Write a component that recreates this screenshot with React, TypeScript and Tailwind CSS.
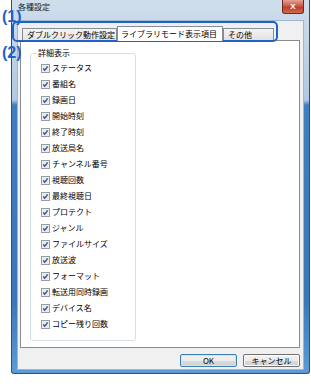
import React from "react";

const items = [
  "ステータス",
  "番組名",
  "録画日",
  "開始時刻",
  "終了時刻",
  "放送局名",
  "チャンネル番号",
  "視聴回数",
  "最終視聴日",
  "プロテクト",
  "ジャンル",
  "ファイルサイズ",
  "放送波",
  "フォーマット",
  "転送用同時録画",
  "デバイス名",
  "コピー残り回数",
];

function CheckBox() {
  return (
    <svg width="9" height="9" viewBox="0 0 9 9" className="shrink-0">
      <rect x="0.5" y="0.5" width="8" height="8" fill="#f4f4f4" stroke="#9a9b9c" />
      <rect x="1.5" y="1.5" width="6" height="6" fill="#e3e6ea" />
      <path d="M2.2 4.5 L3.7 6.2 L6.8 2.3" fill="none" stroke="#2f55a0" strokeWidth="1.3" />
    </svg>
  );
}

export default function App() {
  return (
    <div className="relative w-[311px] h-[386px] overflow-hidden bg-white font-['Noto_Sans_CJK_JP',sans-serif] text-black">
      {/* window frame */}
      <div className="ml-[11px] w-[299px] h-[374px] flex flex-col border border-t-0 border-[#30506f] rounded-b-[3px] px-[5px] pb-[3px] bg-[linear-gradient(to_bottom,#d0deec_0px,#bdd1e6_60px,#b0c9e3_100px,#3f7fc0_105px,#3a77b6_300px,#5d9bd6_372px)]">
        {/* title bar */}
        <div className="h-[20px] flex items-start justify-between">
          <span className="pl-[1px] pt-[2px] text-[8px] leading-[10px] text-[#1c1c1c]">各種設定</span>
          <div className="w-[22px] h-[14px] flex items-center justify-center rounded-b-[3px] border border-t-0 border-[#6b2a22] bg-[linear-gradient(to_bottom,#e4a295,#c8503e_50%,#b83a28_51%,#d66a4a)]">
            <span className="text-[8px] leading-none font-bold text-white font-['Liberation_Sans',sans-serif]">X</span>
          </div>
        </div>

        {/* client area */}
        <div className="flex-1 flex flex-col bg-[#f0f0f0] border border-[#9fb6cf] pl-[2px] pr-[3px] pt-[5px] pb-[2px]">
          {/* tabs */}
          <div className="h-[14px] flex items-end pl-[2px] text-[8px] leading-[10px]">
            <div className="w-[95px] h-[12px] flex items-center pl-[4px] border border-b-0 border-[#898c95] bg-[linear-gradient(to_bottom,#f4f4f4,#e4e4e4)]">
              ダブルクリック動作設定
            </div>
            <div className="relative z-10 -mb-px w-[106px] h-[15px] flex items-center pl-[3px] pb-[1px] border border-b-0 border-[#898c95] bg-white">
              ライブラリモード表示項目
            </div>
            <div className="w-[51px] h-[12px] flex items-center pl-[4px] border border-b-0 border-[#898c95] bg-[linear-gradient(to_bottom,#f4f4f4,#e1e1e1)]">
              その他
            </div>
          </div>

          {/* tab panel */}
          <div className="h-[308px] border border-[#898c95] bg-white pl-[9px] pt-[7px]">
            <fieldset className="w-[106px] border border-[#d5dfe5] rounded-[3px] pl-[10px] pt-[2px] pb-[8px]">
              <legend className="ml-[-4px] px-[1px] text-[8px] leading-[10px]">詳細表示</legend>
              {items.map((label) => (
                <div key={label} className="h-[16px] flex items-center gap-[2px] text-[8px] leading-[10px]">
                  <CheckBox />
                  <span>{label}</span>
                </div>
              ))}
            </fieldset>
          </div>

          {/* buttons */}
          <div className="mt-[6px] flex justify-end gap-[6px] text-[8px] leading-none">
            <button className="w-[57px] h-[13px] rounded-[2px] border border-[#3c7fb1] bg-[linear-gradient(to_bottom,#f3f3f3,#ebebeb_50%,#dddddd_51%,#cfcfcf)] shadow-[inset_0_0_0_1px_#c6e6fb]">
              OK
            </button>
            <button className="w-[57px] h-[13px] rounded-[2px] border border-[#707070] bg-[linear-gradient(to_bottom,#f2f2f2,#ebebeb_50%,#dddddd_51%,#cfcfcf)] shadow-[inset_0_0_0_1px_#fcfcfc]">
              キャンセル
            </button>
          </div>
        </div>
      </div>

      {/* annotations */}
      <span className="absolute left-[2px] top-[9px] text-[16px] leading-[16px] font-bold text-[#1f63c8] font-['Liberation_Sans',sans-serif]">
        (1)
      </span>
      <span className="absolute left-[2px] top-[45px] text-[16px] leading-[16px] font-bold text-[#1f63c8] font-['Liberation_Sans',sans-serif]">
        (2)
      </span>
      <div className="absolute left-[12px] top-[21px] w-[266px] h-[21px] rounded-[5px] border-2 border-[#1f63c8]" />
    </div>
  );
}
